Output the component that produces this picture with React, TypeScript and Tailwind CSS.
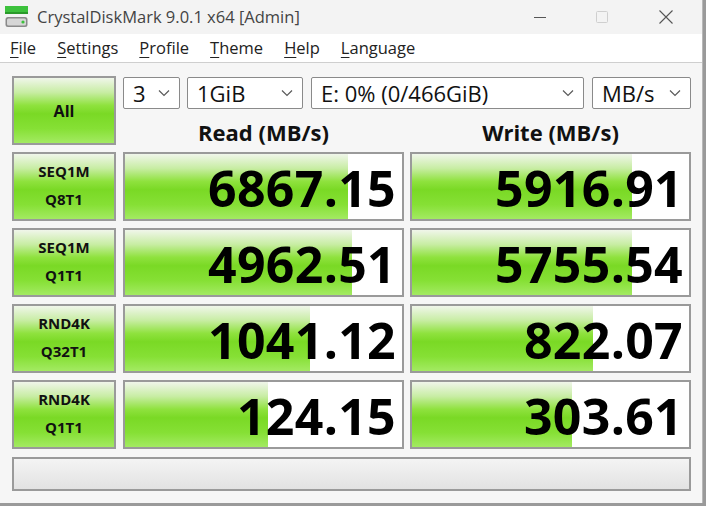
import React from 'react'

type Result = { label: [string, string]; read: string; write: string; readFill: number; writeFill: number }

const results: Result[] = [
  { label: ['SEQ1M', 'Q8T1'], read: '6867.15', write: '5916.91', readFill: 223, writeFill: 220 },
  { label: ['SEQ1M', 'Q1T1'], read: '4962.51', write: '5755.54', readFill: 227, writeFill: 220 },
  { label: ['RND4K', 'Q32T1'], read: '1041.12', write: '822.07', readFill: 185, writeFill: 181 },
  { label: ['RND4K', 'Q1T1'], read: '124.15', write: '303.61', readFill: 143, writeFill: 160 },
]

const green =
  'bg-[linear-gradient(to_bottom,#f0f6ea_0%,#c8eda4_22%,#8fe23e_42%,#7ad925_55%,#86e035_78%,#a3ea62_100%)]'

function Chevron() {
  return (
    <svg width="12" height="8" viewBox="0 0 12 8" className="shrink-0">
      <path d="M1 1.5 L6 6.5 L11 1.5" fill="none" stroke="#5a5a5a" strokeWidth="1.2" />
    </svg>
  )
}

function Combo({ value, width }: { value: string; width: string }) {
  return (
    <div className={`${width} h-[32px] bg-white border border-[#8a8a8a] rounded-[2px] flex items-center justify-between pl-[9px] pr-[9px]`}>
      <span className="text-[22px] text-[#111] leading-none">{value}</span>
      <Chevron />
    </div>
  )
}

function Bar({ value, fill }: { value: string; fill: number }) {
  return (
    <div className="relative w-[281px] h-[69px] bg-white border-2 border-[#9a9a9a] overflow-hidden">
      <div className={`absolute left-0 top-0 bottom-0 ${green}`} style={{ width: fill }} />
      <div className="relative h-full flex items-center justify-end pr-[6px] pt-[3px]">
        <span className="text-[50px] font-bold leading-none text-black tracking-[0.3px]">{value}</span>
      </div>
    </div>
  )
}

function MenuItem({ first, rest }: { first: string; rest: string }) {
  return (
    <span className="text-[16.5px] text-[#222]">
      <span className="underline underline-offset-[3px] decoration-1">{first}</span>
      {rest}
    </span>
  )
}

export default function App() {
  return (
    <div className="w-[706px] h-[506px] bg-[#9a9a9a] flex" style={{ fontFamily: '"Open Sans", "Noto Sans", sans-serif' }}>
      <div className="w-[703px] h-[503px] bg-[#f6f6f6] border-r border-[#b8b8b8] flex flex-col">
        {/* title bar */}
        <div className="h-[34px] bg-[#f3f3f3] flex items-center shrink-0">
          <svg width="24" height="22" viewBox="0 0 24 22" className="ml-[5px]">
            <rect x="0" y="0" width="23" height="8" fill="#3cc13c" />
            <rect x="0" y="6" width="23" height="2" fill="#2a9a2a" />
            <rect x="0.5" y="11" width="22" height="10" rx="2.5" fill="#8a8a8a" />
            <rect x="2" y="12.5" width="19" height="7" rx="1.5" fill="#d6d6d6" />
            <circle cx="18" cy="16" r="1.6" fill="#3cc13c" />
          </svg>
          <span className="ml-[8px] text-[16.5px] text-[#444]">CrystalDiskMark 9.0.1 x64 [Admin]</span>
          <div className="ml-auto flex items-center h-full">
            <svg width="14" height="14" viewBox="0 0 14 14" className="mr-[48px]">
              <path d="M1 7.5 H13" stroke="#555" strokeWidth="1" />
            </svg>
            <svg width="14" height="14" viewBox="0 0 14 14" className="mr-[49px]">
              <rect x="1.5" y="1.5" width="11" height="11" rx="1" fill="none" stroke="#cfcfcf" strokeWidth="1" />
            </svg>
            <svg width="16" height="16" viewBox="0 0 16 16" className="mr-[28px]">
              <path d="M1.5 1.5 L14.5 14.5 M14.5 1.5 L1.5 14.5" stroke="#555" strokeWidth="1.1" />
            </svg>
          </div>
        </div>

        {/* menu */}
        <div className="h-[29px] bg-white border-b border-[#cfcfcf] flex items-center gap-[21px] pl-[10px] shrink-0">
          <MenuItem first="F" rest="ile" />
          <MenuItem first="S" rest="ettings" />
          <MenuItem first="P" rest="rofile" />
          <MenuItem first="T" rest="heme" />
          <MenuItem first="H" rest="elp" />
          <MenuItem first="L" rest="anguage" />
        </div>

        {/* main */}
        <div className="pl-[12px] pt-[13px] flex flex-col">
          <div className="flex h-[69px]">
            <div className={`w-[104px] h-[69px] border-2 border-[#9a9a9a] ${green} flex items-center justify-center`}>
              <span className="text-[16px] font-bold text-[#111]">All</span>
            </div>
            <div className="ml-[7px] h-[69px] flex flex-col">
              <div className="flex mt-[1px]">
                <Combo value="3" width="w-[57px]" />
                <div className="w-[7px]" />
                <Combo value="1GiB" width="w-[116px]" />
                <div className="w-[8px]" />
                <Combo value="E: 0% (0/466GiB)" width="w-[273px]" />
                <div className="w-[8px]" />
                <Combo value="MB/s" width="w-[99px]" />
              </div>
              <div className="flex gap-[6px] pt-[9px]">
                <div className="w-[281px] text-center text-[22px] font-bold text-[#111] leading-[28px]">Read (MB/s)</div>
                <div className="w-[281px] text-center text-[22px] font-bold text-[#111] leading-[28px]">Write (MB/s)</div>
              </div>
            </div>
          </div>

          <div className="mt-[7px] flex flex-col gap-[7px]">
            {results.map(r => (
              <div key={r.label.join('')} className="flex">
                <div className={`w-[104px] h-[69px] border-2 border-[#9a9a9a] ${green} flex flex-col items-center justify-center pb-[4px]`}>
                  <span className="text-[15px] font-bold text-[#111] leading-[28px]">{r.label[0]}</span>
                  <span className="text-[15px] font-bold text-[#111] leading-[28px]">{r.label[1]}</span>
                </div>
                <div className="ml-[7px]">
                  <Bar value={r.read} fill={r.readFill} />
                </div>
                <div className="ml-[6px]">
                  <Bar value={r.write} fill={r.writeFill} />
                </div>
              </div>
            ))}
          </div>

          <div className="mt-[8px] w-[679px] h-[34px] border-2 border-[#9a9a9a] bg-[linear-gradient(to_bottom,#f4f4f4,#e2e2e2)]" />
        </div>
      </div>
    </div>
  )
}
